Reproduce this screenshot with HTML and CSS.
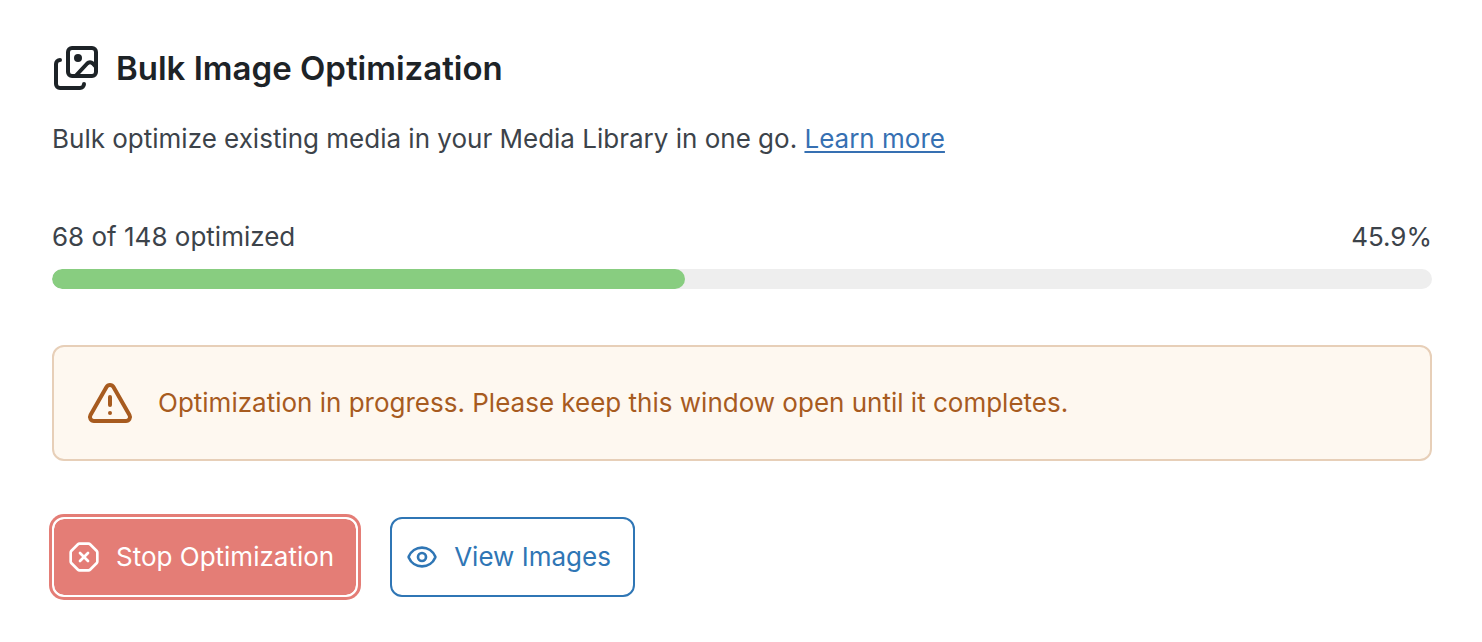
FILE: index.html
```html
<!DOCTYPE html>
<html lang="en">
<head>
<meta charset="utf-8">
<meta name="viewport" content="width=device-width, initial-scale=1">
<title>Bulk Image Optimization</title>
<link rel="stylesheet" href="styles.css">
</head>
<body>
<main class="panel">
  <header class="header">
    <h1 class="title">
      <svg class="icon-lg" viewBox="0 0 48 48" aria-hidden="true">
        <g class="stroke" stroke-width="4">
          <rect x="16" y="4" width="28" height="28" rx="4"/>
          <path d="M24 31.500 35.200 19.500a4 4 0 0 1 5.600 0L44 23"/>
          <path d="M8 16a4 4 0 0 0-4 4v20a4 4 0 0 0 4 4h20a4 4 0 0 0 4-4"/>
        </g>
        <circle cx="26" cy="14" r="4" fill="currentColor"/>
      </svg>
      <span>Bulk Image Optimization</span>
    </h1>
    <p class="intro">Bulk optimize existing media in your Media Library in one go. <a class="link" href="#learn-more">Learn more</a></p>
  </header>

  <section class="progress">
    <div class="progress-labels">
      <span id="progress-label">68 of 148 optimized</span>
      <span>45.9%</span>
    </div>
    <div class="track" role="progressbar" aria-labelledby="progress-label" aria-valuemin="0" aria-valuemax="148" aria-valuenow="68">
      <div class="fill" style="width: 45.9%"></div>
    </div>
  </section>

  <div class="notice" role="status">
    <svg class="icon-lg" viewBox="0 0 24 24" aria-hidden="true">
      <g class="stroke" stroke-width="2">
        <path d="m21.73 18-8-14a2 2 0 0 0-3.48 0l-8 14A2 2 0 0 0 4 21h16a2 2 0 0 0 1.73-3"/>
        <path d="M12 9v4"/>
        <path d="M12 17h.01"/>
      </g>
    </svg>
    <span>Optimization in progress. Please keep this window open until it completes.</span>
  </div>

  <div class="actions">
    <button class="button button-stop" type="button">
      <svg class="icon" viewBox="0 0 24 24" aria-hidden="true">
        <g class="stroke" stroke-width="2">
          <path d="M2.586 16.726A2 2 0 0 1 2 15.312V8.688a2 2 0 0 1 .586-1.414l4.688-4.688A2 2 0 0 1 8.688 2h6.624a2 2 0 0 1 1.414.586l4.688 4.688A2 2 0 0 1 22 8.688v6.624a2 2 0 0 1-.586 1.414l-4.688 4.688a2 2 0 0 1-1.414.586H8.688a2 2 0 0 1-1.414-.586z"/>
          <path d="m15 9-6 6"/>
          <path d="m9 9 6 6"/>
        </g>
      </svg>
      <span>Stop Optimization</span>
    </button>
    <button class="button button-view" type="button">
      <svg class="icon" viewBox="0 0 24 24" aria-hidden="true">
        <g class="stroke" stroke-width="2">
          <path d="M2.062 12.348a1 1 0 0 1 0-.696 10.75 10.75 0 0 1 19.876 0 1 1 0 0 1 0 .696 10.75 10.75 0 0 1-19.876 0"/>
          <circle cx="12" cy="12" r="3"/>
        </g>
      </svg>
      <span>View Images</span>
    </button>
  </div>
</main>
</body>
</html>
```
FILE: styles.css
```css
* {
  box-sizing: border-box;
}

body {
  margin: 0;
  background: #fff;
  color: #3c434a;
  font-family: Inter, "Liberation Sans", sans-serif;
  font-size: 26px;
  line-height: 38px;
}

.panel {
  display: flex;
  flex-direction: column;
  gap: 56px;
  padding: 44px 50px 44px 52px;
}

.header {
  display: flex;
  flex-direction: column;
  gap: 28px;
  margin-bottom: 4px;
}

.title {
  display: flex;
  align-items: center;
  gap: 16px;
  margin: 0;
  color: #1d2327;
  font-size: 33px;
  font-weight: 600;
  line-height: 48px;
}

.intro {
  margin: 0;
}

.link {
  color: #3670b2;
  text-decoration-thickness: 2px;
  text-underline-offset: 3px;
}

.icon {
  flex: none;
  width: 32px;
  height: 32px;
}

.icon-lg {
  flex: none;
  width: 48px;
  height: 48px;
}

.stroke {
  fill: none;
  stroke: currentColor;
  stroke-linecap: round;
  stroke-linejoin: round;
}

.progress {
  display: flex;
  flex-direction: column;
  gap: 13px;
}

.progress-labels {
  display: flex;
  justify-content: space-between;
}

.track {
  height: 20px;
  border-radius: 10px;
  background: #eee;
  overflow: hidden;
}

.fill {
  height: 100%;
  border-radius: 10px;
  background: #88cd80;
}

.notice {
  display: flex;
  align-items: center;
  gap: 24px;
  padding: 32px;
  border: 2px solid #e7cfb8;
  border-radius: 12px;
  background: #fef8f0;
  color: #a75b1f;
}

.actions {
  display: flex;
  gap: 32px;
}

.button {
  display: flex;
  align-items: center;
  gap: 16px;
  padding: 19px 22px 19px 14px;
  border: 2px solid;
  border-radius: 12px;
  font: inherit;
  cursor: pointer;
}

.button-stop {
  border-color: #fff;
  background: #e47d76;
  background-clip: padding-box;
  box-shadow: 0 0 0 3px #e47d76;
  color: #fff;
}

.button-view {
  border-color: #2f76b5;
  background: #fff;
  color: #2f76b5;
}
```
